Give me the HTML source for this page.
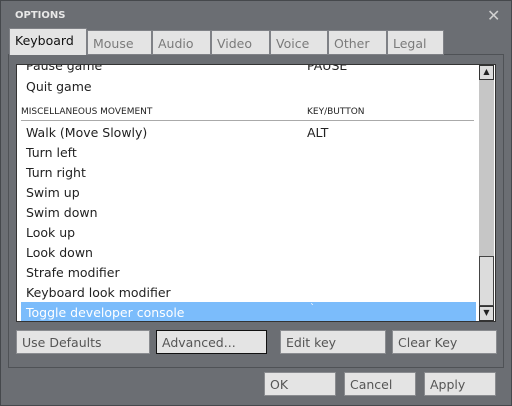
<!DOCTYPE html><html><head><style>
*{margin:0;padding:0;box-sizing:border-box}
body{width:512px;height:406px;background:#6b6e73;font-family:"DejaVu Sans","Liberation Sans",sans-serif;font-size:12px;position:relative;overflow:hidden;box-shadow:inset 0 0 0 1px #45484c}
div{position:absolute}
.t{top:30px;height:25px;background:#e4e4e4;border:1px solid #7f8186;color:#7a7a7a;padding:5px 0 0 5px;font-size:12.5px}
.b{background:#e4e4e4;border:1px solid #8a8c90;color:#555;padding:4px 0 0 5px;height:24px;font-size:12.5px}
.r{left:26px;color:#222;font-size:12.5px}
</style></head><body>
<div style="left:15px;top:10px;color:#e8e8e8;font-weight:bold;font-size:10px">OPTIONS</div>
<div style="left:487px;top:6px;color:#d0d0d0;font-size:16px;font-weight:bold">✕</div>
<div style="left:8px;top:54px;width:496px;height:314px;border:1px solid #4f5256"></div>
<div class="t" style="left:9px;top:28px;width:78px;height:27px;color:#111;border-bottom:none;padding-top:4px">Keyboard</div>
<div class="t" style="left:87px;width:65px">Mouse</div>
<div class="t" style="left:152px;width:59px">Audio</div>
<div class="t" style="left:211px;width:59px">Video</div>
<div class="t" style="left:270px;width:58px">Voice</div>
<div class="t" style="left:328px;width:59px">Other</div>
<div class="t" style="left:387px;width:57px">Legal</div>
<div style="left:16px;top:64px;width:480px;height:258px;background:#fff;border:1px solid #333;overflow:hidden">
 <div style="left:4px;top:237px;width:455px;height:20px;background:#7bbcfb"></div>
 <div class="r" style="left:9px;top:-7px">Pause game</div><div class="r" style="left:290px;top:-7px">PAUSE</div>
 <div class="r" style="left:9px;top:14px">Quit game</div>
 <div style="left:4px;top:42px;font-size:9px;color:#222">MISCELLANEOUS MOVEMENT</div>
 <div style="left:290px;top:42px;font-size:9px;color:#222">KEY/BUTTON</div>
 <div style="left:4px;top:55px;width:453px;height:1px;background:#aaa"></div>
 <div class="r" style="left:9px;top:60px">Walk (Move Slowly)</div><div class="r" style="left:290px;top:60px">ALT</div>
 <div class="r" style="left:9px;top:80px">Turn left</div>
 <div class="r" style="left:9px;top:100px">Turn right</div>
 <div class="r" style="left:9px;top:120px">Swim up</div>
 <div class="r" style="left:9px;top:140px">Swim down</div>
 <div class="r" style="left:9px;top:160px">Look up</div>
 <div class="r" style="left:9px;top:180px">Look down</div>
 <div class="r" style="left:9px;top:200px">Strafe modifier</div>
 <div class="r" style="left:9px;top:220px">Keyboard look modifier</div>
 <div class="r" style="left:9px;top:240px;color:#fff">Toggle developer console</div>
 <div style="left:293px;top:238px;color:#fff;font-size:10px">`</div>
 <div style="left:462px;top:0;width:15px;height:256px;background:#c6c6c6"></div>
 <div style="left:462px;top:0;width:15px;height:15px;background:#dcdcdc;border:1px solid #333;font-size:8px;text-align:center;line-height:12px;color:#222">▲</div>
 <div style="left:462px;top:191px;width:15px;height:50px;background:#dcdcdc;border:1px solid #444"></div>
 <div style="left:462px;top:241px;width:15px;height:15px;background:#dcdcdc;border:1px solid #333;font-size:8px;text-align:center;line-height:12px;color:#222">▼</div>
</div>
<div class="b" style="left:16px;top:330px;width:134px">Use Defaults</div>
<div class="b" style="left:156px;top:330px;width:111px;border-color:#111">Advanced...</div>
<div class="b" style="left:280px;top:330px;width:106px">Edit key</div>
<div class="b" style="left:392px;top:330px;width:105px">Clear Key</div>
<div class="b" style="left:264px;top:372px;width:72px">OK</div>
<div class="b" style="left:344px;top:372px;width:72px">Cancel</div>
<div class="b" style="left:424px;top:372px;width:72px">Apply</div>
</body></html>
